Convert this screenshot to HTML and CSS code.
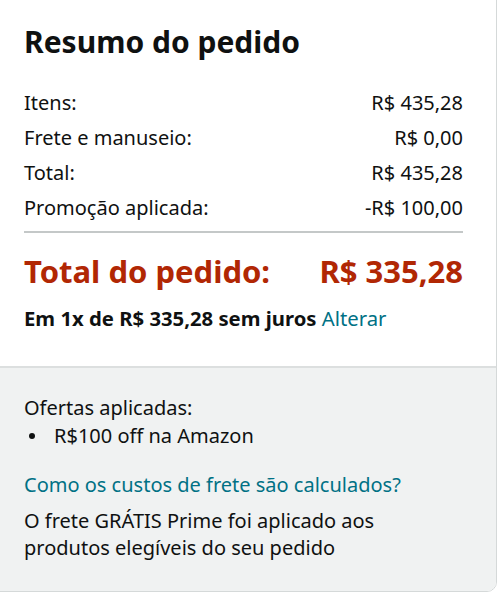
FILE: index.html
```html
<!DOCTYPE html>
<html lang="pt-BR">
<head>
    <meta charset="UTF-8">
    <title>Resumo do pedido</title>
    <link rel="stylesheet" href="styles.css">
</head>
<body>
    <div class="summary-box">
        <div class="summary-main">
            <h1>Resumo do pedido</h1>

            <div class="summary-row">
                <span>Itens:</span>
                <span>R$ 435,28</span>
            </div>
            <div class="summary-row">
                <span>Frete e manuseio:</span>
                <span>R$ 0,00</span>
            </div>
            <div class="summary-row">
                <span>Total:</span>
                <span>R$ 435,28</span>
            </div>
            <div class="summary-row">
                <span>Promoção aplicada:</span>
                <span>-R$ 100,00</span>
            </div>

            <hr class="divider">

            <div class="order-total">
                <span>Total do pedido:</span>
                <span>R$ 335,28</span>
            </div>

            <p class="installments">Em 1x de R$ 335,28 sem juros <a href="#">Alterar</a></p>
        </div>

        <!-- Ofertas / frete -->
        <div class="summary-extra">
            <p>Ofertas aplicadas:</p>
            <ul class="offers">
                <li>R$100 off na Amazon</li>
            </ul>

            <a class="shipping-link" href="#">Como os custos de frete são calculados?</a>
            <p class="prime-note">O frete GRÁTIS Prime foi aplicado aos produtos elegíveis do seu pedido</p>
        </div>
    </div>
</body>
</html>
```

FILE: styles.css
```css
* {
    margin: 0;
    padding: 0;
    box-sizing: border-box;
}

body {
    background-color: #fff;
    color: #0f1111;
    font-family: "Noto Sans", "Open Sans", Arial, sans-serif;
    font-size: 20px;
    overflow: hidden;
}

a {
    color: #007185;
    text-decoration: none;
}

.summary-box {
    margin: -10px 3px 0 -10px;
    height: 602px;
    border: 1px solid #d5d9d9;
    border-radius: 10px;
    overflow: hidden;
    display: flex;
    flex-direction: column;
}

.summary-main {
    padding: 31px 33px 0 33px;
    height: 377px;
    border-bottom: 2px solid #dcdfdf;
}

.summary-main h1 {
    font-size: 30px;
    font-weight: 700;
    line-height: 40px;
    margin-bottom: 24px;
}

.summary-row {
    display: flex;
    justify-content: space-between;
    line-height: 26px;
    padding: 4px 0 5px;
}

.divider {
    border: none;
    border-top: 2px solid #c4c8c8;
    margin: 5px 0 18px;
}

.order-total {
    display: flex;
    justify-content: space-between;
    color: #b12704;
    font-size: 31px;
    font-weight: 700;
    line-height: 40px;
}

.installments {
    font-size: 20.3px;
    font-weight: 700;
    margin-top: 14px;
    line-height: 26px;
}

.installments a {
    font-weight: 400;
}

.summary-extra {
    flex: 1;
    background-color: #f0f2f2;
    padding: 26px 32px 0 33px;
    line-height: 28px;
}

.offers {
    list-style: none;
    margin-bottom: 21px;
}

.offers li {
    padding-left: 30px;
    position: relative;
}

.offers li::before {
    content: "";
    position: absolute;
    left: 5px;
    top: 11px;
    width: 6px;
    height: 6px;
    border-radius: 50%;
    background-color: #0f1111;
}

.shipping-link {
    display: block;
    margin-bottom: 8px;
}

.prime-note {
    width: 400px;
    line-height: 27px;
}
```
